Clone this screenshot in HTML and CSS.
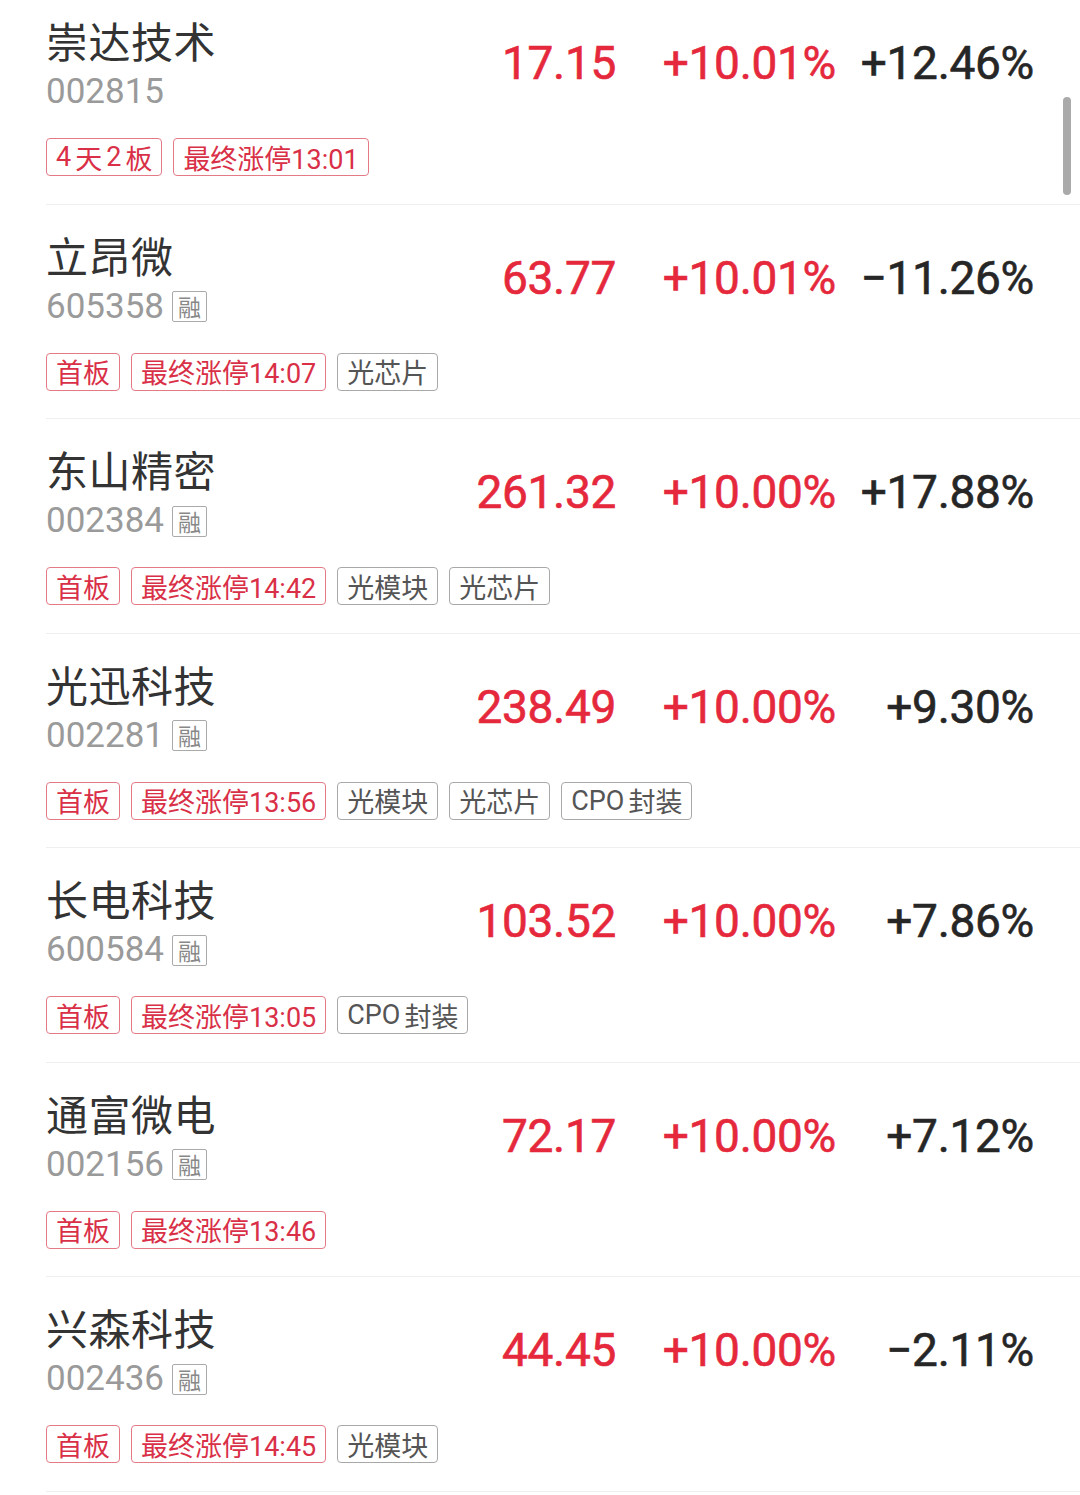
FILE: index.html
```html
<!DOCTYPE html>
<html lang="zh-CN">
<head>
  <meta charset="UTF-8">
  <title>涨停股</title>
  <meta name="viewport" content="width=device-width, initial-scale=1.0">
  <link rel="stylesheet" href="styles.css">
</head>
<body>
  <div class="stock-list">
    <div class="stock-row">
      <div class="stock-main">
        <div class="stock-info">
          <div class="stock-name">崇达技术</div>
          <div class="stock-code">002815</div>
        </div>
        <div class="price up">17.15</div>
        <div class="pct up">+10.01%</div>
        <div class="pct2">+12.46%</div>
      </div>
      <div class="tags">
        <span class="tag red">4<i class="sp"></i>天<i class="sp"></i>2<i class="sp"></i>板</span>
        <span class="tag red">最终涨停13:01</span>
      </div>
    </div>

    <div class="stock-row">
      <div class="stock-main">
        <div class="stock-info">
          <div class="stock-name">立昂微</div>
          <div class="stock-code">605358<span class="rong">融</span></div>
        </div>
        <div class="price up">63.77</div>
        <div class="pct up">+10.01%</div>
        <div class="pct2">−11.26%</div>
      </div>
      <div class="tags">
        <span class="tag red">首板</span>
        <span class="tag red">最终涨停14:07</span>
        <span class="tag">光芯片</span>
      </div>
    </div>

    <div class="stock-row">
      <div class="stock-main">
        <div class="stock-info">
          <div class="stock-name">东山精密</div>
          <div class="stock-code">002384<span class="rong">融</span></div>
        </div>
        <div class="price up">261.32</div>
        <div class="pct up">+10.00%</div>
        <div class="pct2">+17.88%</div>
      </div>
      <div class="tags">
        <span class="tag red">首板</span>
        <span class="tag red">最终涨停14:42</span>
        <span class="tag">光模块</span>
        <span class="tag">光芯片</span>
      </div>
    </div>

    <div class="stock-row">
      <div class="stock-main">
        <div class="stock-info">
          <div class="stock-name">光迅科技</div>
          <div class="stock-code">002281<span class="rong">融</span></div>
        </div>
        <div class="price up">238.49</div>
        <div class="pct up">+10.00%</div>
        <div class="pct2">+9.30%</div>
      </div>
      <div class="tags">
        <span class="tag red">首板</span>
        <span class="tag red">最终涨停13:56</span>
        <span class="tag">光模块</span>
        <span class="tag">光芯片</span>
        <span class="tag">CPO<i class="sp"></i>封装</span>
      </div>
    </div>

    <div class="stock-row">
      <div class="stock-main">
        <div class="stock-info">
          <div class="stock-name">长电科技</div>
          <div class="stock-code">600584<span class="rong">融</span></div>
        </div>
        <div class="price up">103.52</div>
        <div class="pct up">+10.00%</div>
        <div class="pct2">+7.86%</div>
      </div>
      <div class="tags">
        <span class="tag red">首板</span>
        <span class="tag red">最终涨停13:05</span>
        <span class="tag">CPO<i class="sp"></i>封装</span>
      </div>
    </div>

    <div class="stock-row">
      <div class="stock-main">
        <div class="stock-info">
          <div class="stock-name">通富微电</div>
          <div class="stock-code">002156<span class="rong">融</span></div>
        </div>
        <div class="price up">72.17</div>
        <div class="pct up">+10.00%</div>
        <div class="pct2">+7.12%</div>
      </div>
      <div class="tags">
        <span class="tag red">首板</span>
        <span class="tag red">最终涨停13:46</span>
      </div>
    </div>

    <div class="stock-row">
      <div class="stock-main">
        <div class="stock-info">
          <div class="stock-name">兴森科技</div>
          <div class="stock-code">002436<span class="rong">融</span></div>
        </div>
        <div class="price up">44.45</div>
        <div class="pct up">+10.00%</div>
        <div class="pct2">−2.11%</div>
      </div>
      <div class="tags">
        <span class="tag red">首板</span>
        <span class="tag red">最终涨停14:45</span>
        <span class="tag">光模块</span>
      </div>
    </div>
  </div>

  <!-- scroll indicator -->
  <div class="scroll-thumb"></div>
</body>
</html>
```

FILE: styles.css
```css
body {
  margin: 0;
  padding: 0;
  background: #fff;
  font-family: Roboto, "Noto Sans CJK SC", sans-serif;
  color: #333;
  overflow: hidden;
}

.stock-list {
  margin-top: -10px;
}

.stock-row {
  margin-left: 46px;
  height: 213.5px;
  border-bottom: 1px solid #efefef;
  box-sizing: content-box;
}

.stock-main {
  display: grid;
  grid-template-columns: 1fr 200px 220px 198px;
  align-items: center;
  padding-right: 46px;
  padding-top: 24px;
}

.stock-name {
  font-family: "Noto Sans CJK SC", sans-serif;
  font-size: 42px;
  line-height: 52px;
  color: #333;
  letter-spacing: 0.5px;
}

.stock-code {
  display: flex;
  align-items: center;
  margin-top: 6px;
  font-size: 35px;
  line-height: 40px;
  color: #9a9a9a;
}

.rong {
  display: inline-block;
  margin-left: 8px;
  width: 33px;
  height: 29px;
  line-height: 29px;
  text-align: center;
  font-family: "Noto Sans CJK SC", sans-serif;
  font-size: 23px;
  color: #888;
  border: 1.5px solid #aaa;
  border-radius: 2px;
}

.price, .pct, .pct2 {
  text-align: right;
  font-size: 46px;
  font-weight: 400;
  letter-spacing: -0.3px;
  padding-top: 0;
  -webkit-text-stroke: 0.6px currentColor;
}

.up {
  color: #e5283c;
}

.pct2 {
  color: #262626;
}

.tags {
  display: flex;
  gap: 11px;
  margin-top: 26px;
}

.tag {
  display: inline-flex;
  align-items: center;
  height: 36px;
  padding: 0 9px;
  font-size: 27px;
  color: #555;
  border: 1.5px solid #a8a8a8;
  border-radius: 4px;
  font-style: normal;
}

.tag.red {
  color: #d93047;
  border-color: #e47a86;
}

.sp {
  display: inline-block;
  width: 4px;
}

.scroll-thumb {
  position: fixed;
  left: 1063px;
  top: 97px;
  width: 8px;
  height: 98px;
  background: #aaa;
  border-radius: 4px;
}
```
